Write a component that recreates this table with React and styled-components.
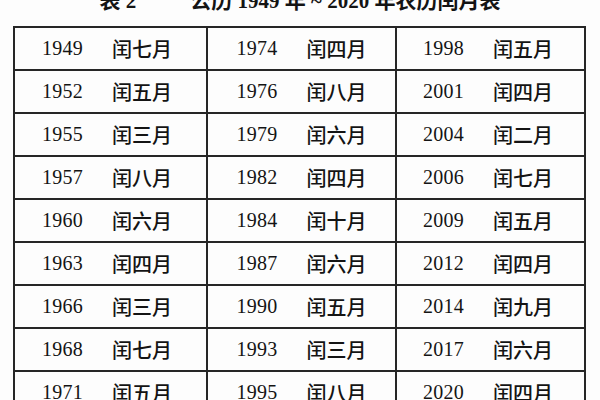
import React from 'react';
import styled, { createGlobalStyle } from 'styled-components';

const GlobalStyle = createGlobalStyle`
  html, body {
    margin: 0;
    padding: 0;
    background: #fdfdfd;
  }
  body {
    width: 600px;
    height: 400px;
    overflow: hidden;
    color: #141414;
    font-family: "Liberation Serif", "Noto Sans CJK SC", serif;
  }
`;

const Page = styled.div`
  display: flex;
  flex-direction: column;
  padding-left: 13px;
`;

const Title = styled.h2`
  margin: -9px 0 14px -13px;
  display: flex;
  justify-content: center;
  gap: 54px;
  font-size: 21px;
  line-height: 21px;
  font-weight: 700;
  white-space: pre;
`;

const Grid = styled.div`
  display: grid;
  grid-template-columns: 193px 189px 189px;
  grid-auto-rows: 43px;
  width: 573px;
  box-sizing: border-box;
  border-top: 2px solid #262626;
  border-left: 2px solid #262626;
`;

const Cell = styled.div`
  box-sizing: border-box;
  border-right: 2px solid #262626;
  border-bottom: 2px solid #262626;
  display: flex;
  align-items: center;
  justify-content: center;
  gap: 29px;
  font-size: 20px;
  padding-right: ${(p) => p.$shift}px;
`;

const Year = styled.span`
  font-weight: 400;
  letter-spacing: 0.2px;
`;

const Month = styled.span`
  font-family: "Noto Sans CJK SC", sans-serif;
  font-weight: 500;
`;

const shifts = [7, 0, 5];

const cols = [
  [
    ['1949', '闰七月'], ['1952', '闰五月'], ['1955', '闰三月'],
    ['1957', '闰八月'], ['1960', '闰六月'], ['1963', '闰四月'],
    ['1966', '闰三月'], ['1968', '闰七月'], ['1971', '闰五月'],
  ],
  [
    ['1974', '闰四月'], ['1976', '闰八月'], ['1979', '闰六月'],
    ['1982', '闰四月'], ['1984', '闰十月'], ['1987', '闰六月'],
    ['1990', '闰五月'], ['1993', '闰三月'], ['1995', '闰八月'],
  ],
  [
    ['1998', '闰五月'], ['2001', '闰四月'], ['2004', '闰二月'],
    ['2006', '闰七月'], ['2009', '闰五月'], ['2012', '闰四月'],
    ['2014', '闰九月'], ['2017', '闰六月'], ['2020', '闰四月'],
  ],
];

export default function App() {
  return (
    <>
      <GlobalStyle />
      <Page>
        <Title>
          <span>表 2</span>
          <span>公历 1949 年 ~ 2020 年农历闰月表</span>
        </Title>
        <Grid>
          {cols[0].map((_, r) =>
            cols.map((col, c) => (
              <Cell key={`${r}-${c}`} $shift={shifts[c]}>
                <Year>{col[r][0]}</Year>
                <Month>{col[r][1]}</Month>
              </Cell>
            ))
          )}
        </Grid>
      </Page>
    </>
  );
}
